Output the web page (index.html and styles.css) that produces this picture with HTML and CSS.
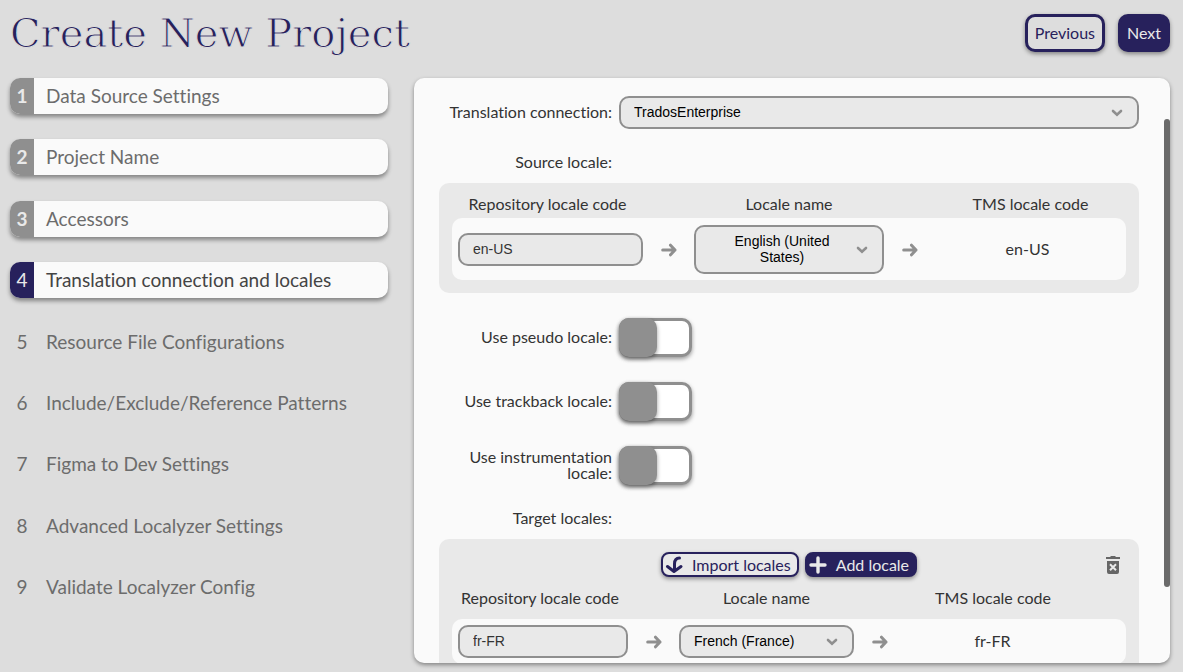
FILE: index.html
```html
<!DOCTYPE html>
<html lang="en">

<head>
    <meta charset="UTF-8">
    <meta name="viewport" content="width=device-width, initial-scale=1.0">
    <title>Create New Project</title>
    <link rel="stylesheet" href="styles.css">
</head>

<body>

    <!-- shared icons -->
    <svg class="sprite" aria-hidden="true">
        <symbol id="arrow" viewBox="0 0 16 14">
            <path d="M1.7 7H14M9.5 2.2L14 7L9.5 11.8" fill="none" stroke="#8f8f8f" stroke-width="3" stroke-linecap="round" stroke-linejoin="round"/>
        </symbol>
    </svg>

    <header class="header">
        <h1>Create New Project</h1>
        <div class="header-buttons">
            <button class="btn btn-outline">Previous</button>
            <button class="btn btn-solid">Next</button>
        </div>
    </header>

    <div class="main">
        <nav class="steps">
            <a href="#" class="step done"><span class="num">1</span><span class="name">Data Source Settings</span></a>
            <a href="#" class="step done"><span class="num">2</span><span class="name">Project Name</span></a>
            <a href="#" class="step done"><span class="num">3</span><span class="name">Accessors</span></a>
            <a href="#" class="step done active"><span class="num">4</span><span class="name">Translation connection and locales</span></a>
            <a href="#" class="step"><span class="num">5</span><span class="name">Resource File Configurations</span></a>
            <a href="#" class="step"><span class="num">6</span><span class="name">Include/Exclude/Reference Patterns</span></a>
            <a href="#" class="step"><span class="num">7</span><span class="name">Figma to Dev Settings</span></a>
            <a href="#" class="step"><span class="num">8</span><span class="name">Advanced Localyzer Settings</span></a>
            <a href="#" class="step"><span class="num">9</span><span class="name">Validate Localyzer Config</span></a>
        </nav>

        <div class="panel">
            <form class="form">
                <div class="row">
                    <label for="connection">Translation connection:</label>
                    <select id="connection" class="field">
                        <option>TradosEnterprise</option>
                    </select>
                </div>

                <div class="group">
                    <div class="row"><span class="label" id="source-label">Source locale:</span></div>
                    <div class="box">
                        <table class="locales source" aria-labelledby="source-label">
                            <thead>
                                <tr>
                                    <th>Repository locale code</th>
                                    <th></th>
                                    <th>Locale name</th>
                                    <th></th>
                                    <th>TMS locale code</th>
                                </tr>
                            </thead>
                            <tbody>
                                <tr>
                                    <td><input type="text" class="field" aria-label="Source repository locale code" value="en-US"></td>
                                    <td><svg class="arrow"><use href="#arrow"/></svg></td>
                                    <td>
                                        <select class="field wrap" aria-label="Source locale name">
                                            <button><selectedcontent></selectedcontent></button>
                                            <option selected>English (United States)</option>
                                        </select>
                                    </td>
                                    <td><svg class="arrow"><use href="#arrow"/></svg></td>
                                    <td class="code">en-US</td>
                                </tr>
                            </tbody>
                        </table>
                    </div>
                </div>

                <div class="row">
                    <label for="pseudo">Use pseudo locale:</label>
                    <input type="checkbox" id="pseudo" class="toggle">
                </div>
                <div class="row">
                    <label for="trackback">Use trackback locale:</label>
                    <input type="checkbox" id="trackback" class="toggle">
                </div>
                <div class="row">
                    <label for="instrumentation">Use instrumentation locale:</label>
                    <input type="checkbox" id="instrumentation" class="toggle">
                </div>

                <div class="group">
                    <div class="row"><span class="label" id="target-label">Target locales:</span></div>
                    <div class="box">
                        <div class="toolbar">
                            <div class="toolbar-buttons">
                                <button type="button" class="btn btn-small btn-outline">
                                    <svg width="18" height="18" viewBox="0 0 18 18"><path d="M14.5 2C11 2 9.5 4.5 9.5 8V14.5M2.5 10.5L9 15.5L16 10.5" fill="none" stroke="#27215c" stroke-width="3" stroke-linecap="round" stroke-linejoin="round"/></svg>
                                    Import locales
                                </button>
                                <button type="button" class="btn btn-small btn-solid">
                                    <svg width="18" height="18" viewBox="0 0 18 18"><path d="M9 2V16M2 9H16" fill="none" stroke="#e9e9e9" stroke-width="3.4" stroke-linecap="round"/></svg>
                                    Add locale
                                </button>
                            </div>
                            <button type="button" class="delete" aria-label="Delete all locales">
                                <svg width="14" height="18" viewBox="0 0 14 18"><path d="M5 0H9L10 1H14V3H0V1H4ZM1 5H13V16Q13 18 11 18H3Q1 18 1 16Z" fill="#666"/><path d="M4 8.2L10 14.2M10 8.2L4 14.2" stroke="#e9e9e9" stroke-width="2"/></svg>
                            </button>
                        </div>
                        <table class="locales target" aria-labelledby="target-label">
                            <thead>
                                <tr>
                                    <th>Repository locale code</th>
                                    <th></th>
                                    <th>Locale name</th>
                                    <th></th>
                                    <th>TMS locale code</th>
                                    <th></th>
                                </tr>
                            </thead>
                            <tbody>
                                <tr>
                                    <td><input type="text" class="field" aria-label="Target repository locale code" value="fr-FR"></td>
                                    <td><svg class="arrow"><use href="#arrow"/></svg></td>
                                    <td>
                                        <select class="field" aria-label="Target locale name">
                                            <option>French (France)</option>
                                        </select>
                                    </td>
                                    <td><svg class="arrow"><use href="#arrow"/></svg></td>
                                    <td class="code">fr-FR</td>
                                    <td></td>
                                </tr>
                            </tbody>
                        </table>
                    </div>
                </div>
            </form>
            <div class="scroll-thumb"></div>
        </div>
    </div>

</body>

</html>
```

FILE: styles.css
```css
* {
    box-sizing: border-box;
}

body {
    margin: 0;
    height: 100vh;
    padding: 0 13px 9px 10px;
    display: flex;
    flex-direction: column;
    background-color: #ddd;
    color: #333;
    font-family: Lato, sans-serif;
    font-size: 16px;
    line-height: 16px;
    font-variant-ligatures: none;
}

.sprite {
    display: none;
}

.header {
    height: 78px;
    flex-shrink: 0;
    display: flex;
    justify-content: space-between;
    align-items: flex-start;
}

h1 {
    margin: 0;
    font-family: "DejaVu Serif", serif;
    font-size: 40px;
    font-weight: normal;
    line-height: 66px;
    white-space: nowrap;
    color: #27215c;
    -webkit-text-stroke: 1px #ddd;
}

.header-buttons {
    display: flex;
    gap: 13px;
    padding-top: 14px;
}

.btn {
    height: 38px;
    padding: 0 6px 2px;
    border: 3px solid #27215c;
    border-radius: 10px;
    font: 16px Lato, sans-serif;
    white-space: nowrap;
    box-shadow: 0 2px 4px rgba(0, 0, 0, 0.4);
    cursor: pointer;
}

.btn-outline {
    background-color: #e9e9e9;
    color: #27215c;
}

.btn-solid {
    background-color: #27215c;
    color: #e9e9e9;
}

.header .btn-outline {
    padding: 0 7px 2px;
    background-color: #ddd;
}

.main {
    flex: 1;
    min-height: 0;
    display: grid;
    grid-template-columns: 1fr 2fr;
    gap: 26px;
}

/* Steps */

.steps {
    display: flex;
    flex-direction: column;
    justify-content: space-between;
    padding-bottom: 58px;
}

.step {
    height: 36px;
    display: flex;
    border-radius: 10px;
    overflow: hidden;
    color: #6c6c6c;
    font-size: 19px;
    line-height: 36px;
    text-decoration: none;
}

.step .num {
    width: 24px;
    text-align: center;
}

.step .name {
    padding-left: 12px;
}

.done {
    background-color: #fafafa;
    box-shadow: 0 3px 4px rgba(0, 0, 0, 0.4);
}

.done .num {
    background-color: #8f8f8f;
    color: #e9e9e9;
    font-weight: bold;
}

.active {
    color: #444;
}

.active .num {
    background-color: #27215c;
    font-weight: normal;
}

/* Panel */

.panel {
    position: relative;
    overflow: hidden;
    min-width: 0;
    border-radius: 10px;
    background-color: #fafafa;
    box-shadow: 0 2px 4px rgba(0, 0, 0, 0.4);
}

.scroll-thumb {
    position: absolute;
    top: 7%;
    right: 0;
    width: 6px;
    height: 80%;
    border-radius: 3px;
    background-color: #6a6a6a;
}

.form {
    display: flex;
    flex-direction: column;
    gap: 25px;
    padding: 18px 31px 0 25px;
}

.row {
    display: grid;
    grid-template-columns: 173px 1fr;
    gap: 7px;
    align-items: center;
    text-align: right;
}

label,
.code {
    padding-bottom: 1px;
}

.group {
    display: flex;
    flex-direction: column;
    gap: 13px;
}

.box {
    padding: 13px;
    border-radius: 10px;
    background-color: #e9e9e9;
}

.field {
    width: 100%;
    height: 33px;
    padding: 0 13px 2px;
    border: 2px solid #8f8f8f;
    border-radius: 10px;
    background-color: #e9e9e9;
    color: #333;
    font: 14px/16px "Liberation Sans", Arial, sans-serif;
}

input.field {
    padding-bottom: 1px;
}

select.field {
    appearance: none;
    padding-right: 40px;
    background-image: url("data:image/svg+xml,%3Csvg xmlns='http://www.w3.org/2000/svg' width='12' height='8'%3E%3Cpath d='M2 2L6 5.7L10 2' fill='none' stroke='%238f8f8f' stroke-width='2.6' stroke-linecap='round'/%3E%3C/svg%3E");
    background-repeat: no-repeat;
    background-position: right 14px center;
    color: #000;
}

select.wrap {
    appearance: base-select;
    height: 49px;
    min-height: 0;
    padding: 6px 40px 6px 26px;
    white-space: normal;
    text-align: center;
}

select.wrap::picker-icon {
    display: none;
}

.wrap button,
.wrap selectedcontent {
    flex: 1;
    white-space: normal;
    text-align: center;
}

/* Toggle */

.toggle {
    appearance: none;
    width: 73px;
    height: 39px;
    margin: 0;
    border: 3px solid #8f8f8f;
    border-radius: 10px;
    background-color: #fff;
    box-shadow: 0 2px 4px rgba(0, 0, 0, 0.4);
}

.toggle::before {
    content: "";
    display: block;
    width: 38px;
    height: 39px;
    margin: -3px;
    border-radius: 10px;
    background-color: #8f8f8f;
    box-shadow: 0 2px 4px rgba(0, 0, 0, 0.4);
}

.toggle:checked::before {
    margin-left: 32px;
}

/* Locale tables */

.locales,
.locales thead,
.locales tbody {
    display: block;
}

.locales tr {
    display: grid;
    align-items: center;
    text-align: center;
}

.locales th,
.locales td {
    padding: 0;
    font-weight: normal;
}

.locales td.code {
    padding-bottom: 1px;
}

.locales thead {
    padding-bottom: 6px;
}

.locales tbody tr {
    padding: 7px 6px 6px;
    border-radius: 10px;
    background-color: #fafafa;
}

.source tr {
    grid-template-columns: 1fr 51px 190px 51px 1fr;
}

.target thead tr {
    grid-template-columns: 176fr 51px 175fr 51px 176fr 45px;
}

.target tbody tr {
    padding-top: 6px;
    grid-template-columns: 170fr 51px 175fr 51px 175fr 40px;
}

.target thead {
    padding: 13px 0;
}

.arrow {
    display: block;
    width: 16px;
    height: 14px;
    margin: 0 auto;
}

/* Toolbar */

.toolbar {
    display: grid;
    grid-template-columns: 1fr auto 1fr;
    align-items: center;
}

.toolbar-buttons {
    grid-column: 2;
    display: flex;
    gap: 6px;
}

.btn-small,
.box .btn-outline {
    height: 25px;
    display: flex;
    align-items: center;
    gap: 9px;
    padding: 0 6px 0 2px;
    border-width: 2px;
    border-radius: 8px;
}

.delete {
    justify-self: end;
    padding: 0 6px;
    border: none;
    background: none;
    line-height: 0;
    cursor: pointer;
}
```
